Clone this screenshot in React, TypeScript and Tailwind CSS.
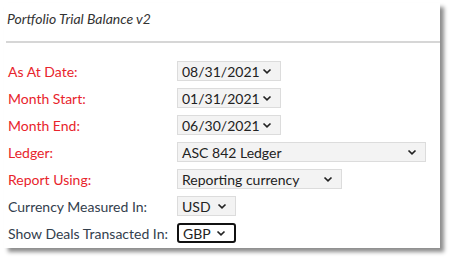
import React from "react"

const Chevron = () => (
  <svg width="10" height="7" viewBox="0 0 10 7" className="shrink-0">
    <path d="M1.5 1.5 L5 4.8 L8.5 1.5" fill="none" stroke="#222" strokeWidth="1.7" />
  </svg>
)

type Row = {
  label: string
  value: string
  required?: boolean
  width: string
  focused?: boolean
}

const rows: Row[] = [
  { label: "As At Date:", value: "08/31/2021", required: true, width: "w-[104px]" },
  { label: "Month Start:", value: "01/31/2021", required: true, width: "w-[104px]" },
  { label: "Month End:", value: "06/30/2021", required: true, width: "w-[104px]" },
  { label: "Ledger:", value: "ASC 842 Ledger", required: true, width: "w-[249px]" },
  { label: "Report Using:", value: "Reporting currency", required: true, width: "w-[165px]" },
  { label: "Currency Measured In:", value: "USD", width: "w-[59px]" },
  { label: "Show Deals Transacted In:", value: "GBP", width: "w-[59px]", focused: true },
]

export default function App() {
  return (
    <div className="w-[451px] h-[260px] bg-white pt-[3px] pl-[4px] font-['Lato','Noto_Sans',sans-serif]">
      <div className="w-[436px] h-[245px] bg-white shadow-[4px_4px_4px_rgba(0,0,0,0.45)]">
        <div className="h-[38px] pl-[3px] pt-[5px] text-[14px] italic text-[#333]">
          Portfolio Trial Balance v2
        </div>
        <div className="ml-[2px] border-t-2 border-[#d6d6d6]" />
        <div className="pt-[18px] flex flex-col gap-[7px]">
          {rows.map((r, i) => (
            <div key={i} className="flex items-center h-[20px]">
              <div
                className={`w-[173px] pl-[4px] text-[14px] ${
                  r.required ? "text-[#e8242c]" : "text-[#33404d]"
                }`}
              >
                {r.label}
              </div>
              <div
                className={`${r.width} h-[20px] flex items-center justify-between pl-[4px] pr-[8px] text-[14px] text-[#222] ${
                  r.focused
                    ? "border-2 border-[#111] rounded-[3px] bg-white"
                    : "border border-[#dcdcdc] bg-[#f3f3f3]"
                }`}
              >
                <span>{r.value}</span>
                <Chevron />
              </div>
            </div>
          ))}
        </div>
      </div>
    </div>
  )
}
